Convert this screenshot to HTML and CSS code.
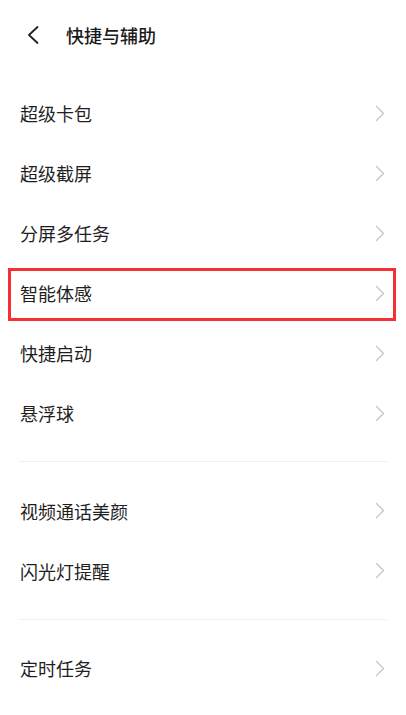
FILE: index.html
```html
<!DOCTYPE html>
<html lang="zh-CN">
<head>
<meta charset="utf-8">
<title>快捷与辅助</title>
<link rel="stylesheet" href="styles.css">
</head>
<body>
<div class="page">
  <header class="header">
    <svg class="back" width="12" height="18" viewBox="0 0 12 18"><path d="M10.5 1 L2 9 L10.5 17" fill="none" stroke="#222" stroke-width="1.8" stroke-linecap="round" stroke-linejoin="round"/></svg>
    <h1 class="title">快捷与辅助</h1>
  </header>
  <section class="group first">
    <div class="row"><span class="label">超级卡包</span><svg class="chev" width="10" height="17" viewBox="0 0 10 17"><path d="M1.5 1.5 L8.5 8.5 L1.5 15.5" fill="none" stroke="#c6c6c6" stroke-width="1.4" stroke-linecap="round" stroke-linejoin="round"/></svg></div>
    <div class="row"><span class="label">超级截屏</span><svg class="chev" width="10" height="17" viewBox="0 0 10 17"><path d="M1.5 1.5 L8.5 8.5 L1.5 15.5" fill="none" stroke="#c6c6c6" stroke-width="1.4" stroke-linecap="round" stroke-linejoin="round"/></svg></div>
    <div class="row"><span class="label">分屏多任务</span><svg class="chev" width="10" height="17" viewBox="0 0 10 17"><path d="M1.5 1.5 L8.5 8.5 L1.5 15.5" fill="none" stroke="#c6c6c6" stroke-width="1.4" stroke-linecap="round" stroke-linejoin="round"/></svg></div>
    <div class="row highlighted"><span class="label">智能体感</span><svg class="chev" width="10" height="17" viewBox="0 0 10 17"><path d="M1.5 1.5 L8.5 8.5 L1.5 15.5" fill="none" stroke="#c6c6c6" stroke-width="1.4" stroke-linecap="round" stroke-linejoin="round"/></svg><span class="mark"></span></div>
    <div class="row"><span class="label">快捷启动</span><svg class="chev" width="10" height="17" viewBox="0 0 10 17"><path d="M1.5 1.5 L8.5 8.5 L1.5 15.5" fill="none" stroke="#c6c6c6" stroke-width="1.4" stroke-linecap="round" stroke-linejoin="round"/></svg></div>
    <div class="row"><span class="label">悬浮球</span><svg class="chev" width="10" height="17" viewBox="0 0 10 17"><path d="M1.5 1.5 L8.5 8.5 L1.5 15.5" fill="none" stroke="#c6c6c6" stroke-width="1.4" stroke-linecap="round" stroke-linejoin="round"/></svg></div>
  </section>
  <hr class="divider">
  <section class="group">
    <div class="row"><span class="label">视频通话美颜</span><svg class="chev" width="10" height="17" viewBox="0 0 10 17"><path d="M1.5 1.5 L8.5 8.5 L1.5 15.5" fill="none" stroke="#c6c6c6" stroke-width="1.4" stroke-linecap="round" stroke-linejoin="round"/></svg></div>
    <div class="row"><span class="label">闪光灯提醒</span><svg class="chev" width="10" height="17" viewBox="0 0 10 17"><path d="M1.5 1.5 L8.5 8.5 L1.5 15.5" fill="none" stroke="#c6c6c6" stroke-width="1.4" stroke-linecap="round" stroke-linejoin="round"/></svg></div>
  </section>
  <hr class="divider">
  <section class="group">
    <div class="row"><span class="label">定时任务</span><svg class="chev" width="10" height="17" viewBox="0 0 10 17"><path d="M1.5 1.5 L8.5 8.5 L1.5 15.5" fill="none" stroke="#c6c6c6" stroke-width="1.4" stroke-linecap="round" stroke-linejoin="round"/></svg></div>
  </section>
</div>
</body>
</html>
```
FILE: styles.css
```css
html, body {
  margin: 0;
  padding: 0;
  background: #ffffff;
}
body {
  font-family: "Noto Sans CJK SC", "Noto Sans", sans-serif;
  color: #1f1f1f;
}
.page {
  width: 406px;
  display: flex;
  flex-direction: column;
}
.header {
  height: 70px;
  display: flex;
  align-items: center;
  padding-left: 27px;
  gap: 27px;
}
.back {
  display: block;
  flex: none;
}
.title {
  margin: 0;
  font-size: 18px;
  font-weight: 500;
  color: #1a1a1a;
  line-height: 1;
}
.group {
  display: flex;
  flex-direction: column;
}
.group.first {
  padding-top: 13px;
}
.row {
  position: relative;
  height: 60px;
  display: flex;
  align-items: center;
  justify-content: space-between;
  padding: 0 21px 0 20px;
}
.label {
  font-size: 18px;
  line-height: 1;
  color: #1f1f1f;
}
.chev {
  display: block;
  flex: none;
}
.mark {
  position: absolute;
  left: 8px;
  right: 10px;
  top: 5px;
  bottom: 2px;
  border: 3px solid #f62f35;
  pointer-events: none;
}
.divider {
  border: 0;
  height: 1px;
  background: #efefef;
  margin: 18px 19px 18.5px 19px;
}
```
